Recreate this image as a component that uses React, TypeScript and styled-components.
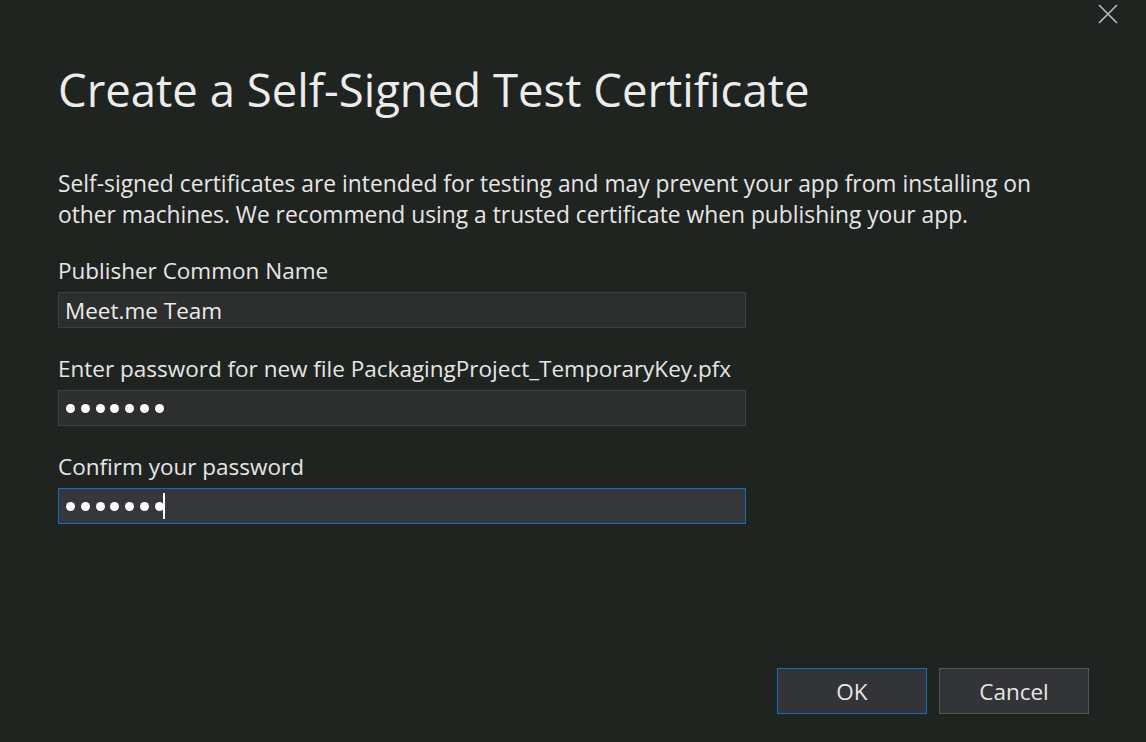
import React from "react";
import styled, { createGlobalStyle } from "styled-components";

const Global = createGlobalStyle`
  html, body { margin: 0; padding: 0; background: #202421; }
  body { font-family: "Open Sans", "Noto Sans", sans-serif; color: #ececec; }
  * { box-sizing: border-box; }
`;

const Dialog = styled.div`
  position: relative;
  width: 1146px;
  height: 742px;
  background: #202421;
  display: flex;
  flex-direction: column;
  padding: 58px 57px 28px 58px;
`;

const Close = styled.button`
  position: absolute;
  top: 2px;
  right: 26px;
  width: 24px;
  height: 24px;
  padding: 0;
  border: 0;
  background: transparent;
  display: flex;
  align-items: center;
  justify-content: center;
`;

const Title = styled.h1`
  margin: 0;
  font-size: 45.5px;
  font-weight: 400;
  line-height: 62px;
  color: #ececec;
`;

const Description = styled.p`
  margin: 48px 0 0 0;
  font-size: 22.8px;
  line-height: 31px;
  color: #e6e6e6;
`;

const Field = styled.div`
  display: flex;
  flex-direction: column;
  width: 688px;
  margin-top: 26px;
`;

const Label = styled.label`
  font-size: 22.5px;
  line-height: 30px;
  color: #e6e6e6;
  margin-bottom: 6px;
  white-space: nowrap;
`;

const Input = styled.div<{ $focused?: boolean }>`
  height: 36px;
  display: flex;
  align-items: center;
  padding: 0 6px;
  font-size: 22.5px;
  background: ${(p) => (p.$focused ? "#35373b" : "#2d2e2e")};
  border: 1px solid ${(p) => (p.$focused ? "#0f6fbe" : "#3d3e3e")};
  color: #ececec;
`;

const Dots = styled.span`
  display: flex;
  gap: 5.8px;
  padding-left: 1px;
`;

const Dot = styled.span`
  width: 9px;
  height: 9px;
  border-radius: 50%;
  background: #ffffff;
`;

const Caret = styled.span`
  display: inline-block;
  width: 2px;
  height: 26px;
  background: #ffffff;
  margin-left: -1px;
`;

const Footer = styled.div`
  margin-top: auto;
  display: flex;
  justify-content: flex-end;
  gap: 12px;
`;

const Button = styled.button<{ $primary?: boolean }>`
  width: 150px;
  height: 46px;
  font-family: "Open Sans", "Noto Sans", sans-serif;
  font-size: 22.5px;
  color: #e6e6e6;
  background: #333437;
  border: 1px solid ${(p) => (p.$primary ? "#0f6fbe" : "#545556")};
  padding: 0;
`;

const Password = ({ count }: { count: number }) => (
  <Dots>
    {Array.from({ length: count }, (_, i) => (
      <Dot key={i} />
    ))}
  </Dots>
);

export default function App() {
  return (
    <>
      <Global />
      <Dialog>
        <Close aria-label="Close">
          <svg width="22" height="22" viewBox="0 0 22 22">
            <path d="M2 2 L20 20 M20 2 L2 20" stroke="#bdbdbd" strokeWidth="1.6" fill="none" />
          </svg>
        </Close>
        <Title>Create a Self-Signed Test Certificate</Title>
        <Description>
          Self-signed certificates are intended for testing and may prevent your app from installing on
          <br />
          other machines. We recommend using a trusted certificate when publishing your app.
        </Description>
        <Field>
          <Label>Publisher Common Name</Label>
          <Input>Meet.me Team</Input>
        </Field>
        <Field>
          <Label>Enter password for new file PackagingProject_TemporaryKey.pfx</Label>
          <Input>
            <Password count={7} />
          </Input>
        </Field>
        <Field>
          <Label>Confirm your password</Label>
          <Input $focused>
            <Password count={7} />
            <Caret />
          </Input>
        </Field>
        <Footer>
          <Button $primary>OK</Button>
          <Button>Cancel</Button>
        </Footer>
      </Dialog>
    </>
  );
}
